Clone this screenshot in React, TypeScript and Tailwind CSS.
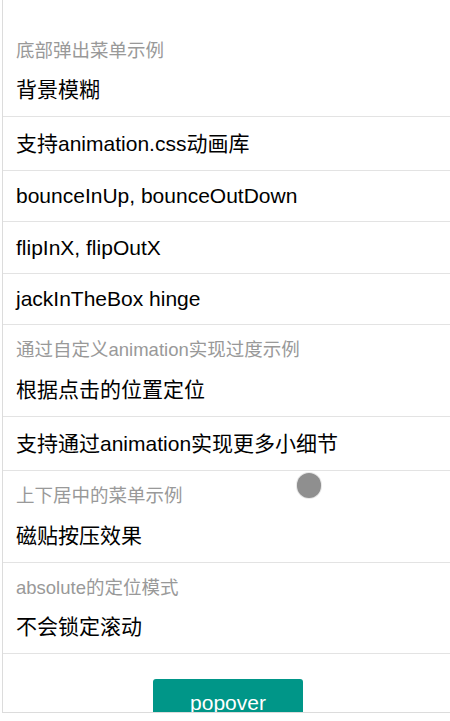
const font = { fontFamily: '"Liberation Sans", Arial, "Noto Sans CJK SC", sans-serif' };

type Row = { kind: "header" | "item"; text: string; h?: string };

const rows: Row[] = [
  { kind: "header", text: "底部弹出菜单示例" },
  { kind: "item", text: "背景模糊", h: "h-[53px]" },
  { kind: "item", text: "支持animation.css动画库", h: "h-[54px]" },
  { kind: "item", text: "bounceInUp, bounceOutDown", h: "h-[51px]" },
  { kind: "item", text: "flipInX, flipOutX", h: "h-[52px]" },
  { kind: "item", text: "jackInTheBox hinge", h: "h-[51px]" },
  { kind: "header", text: "通过自定义animation实现过度示例" },
  { kind: "item", text: "根据点击的位置定位", h: "h-[54px]" },
  { kind: "item", text: "支持通过animation实现更多小细节", h: "h-[54px]" },
  { kind: "header", text: "上下居中的菜单示例" },
  { kind: "item", text: "磁贴按压效果", h: "h-[54px]" },
  { kind: "header", text: "absolute的定位模式" },
  { kind: "item", text: "不会锁定滚动", h: "h-[53px]" },
];

export default function App() {
  return (
    <div className="relative h-[721px] w-[450px] overflow-hidden bg-white" style={font}>
      <div className="ml-[2px] h-[713px] overflow-hidden border-b border-l border-[#dcdcdc]">
        <div className="pt-[26px]">
          {rows.map((r, i) =>
            r.kind === "header" ? (
              <div key={i} className="flex h-[38px] items-start pl-[13px] pt-[13px] text-[18.5px] leading-[24px] text-[#999]">
                {r.text}
              </div>
            ) : (
              <div
                key={i}
                className={`flex ${r.h} items-center border-b border-[#e3e3e3] pl-[13px] text-[21px] leading-[28px] text-black`}
              >
                {r.text}
              </div>
            )
          )}
          <div className="flex justify-center pl-[3px] pt-[25px]">
            <button className="h-[48px] w-[150px] rounded-[3px] bg-[#009688] pb-[2px] text-[21px] leading-[48px] text-white">
              popover
            </button>
          </div>
        </div>
      </div>
      <div className="absolute left-[297px] top-[473px] h-[25px] w-[24px] rounded-full bg-[#8f8f8f] ring-1 ring-[#e8e8e8]" />
    </div>
  );
}
